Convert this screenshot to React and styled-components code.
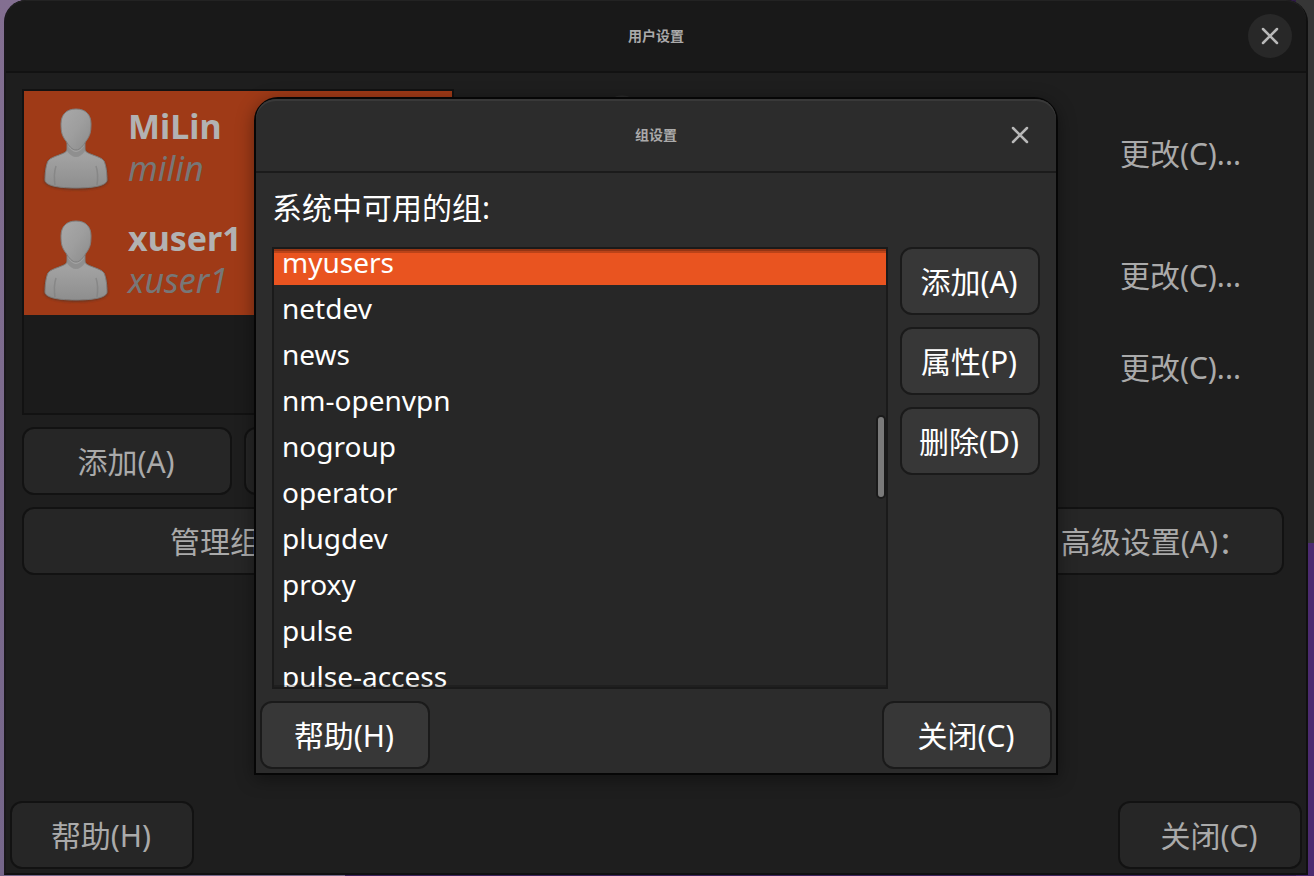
import React from 'react';
import styled, { createGlobalStyle } from 'styled-components';

const GlobalStyle = createGlobalStyle`
  * { box-sizing: border-box; }
  body { margin: 0; }
  body, button {
    font-family: "Noto Sans", "Noto Sans CJK SC", sans-serif;
  }
`;

const Desktop = styled.div`
  display: flex;
  min-height: 100vh;
  padding: 0 6px 1px 4px;
  overflow: hidden;
  background:
    linear-gradient(#363636 0 62%, #4c2b71 62%) right / 18px 100% no-repeat,
    linear-gradient(90deg, #75668a 0 345px, #3d225c 345px) bottom / 100% 2px no-repeat,
    linear-gradient(#836f91, #75668a) left / 24px 100% no-repeat,
    #2f1b47;
`;

const Window = styled.main`
  position: relative;
  flex: 1;
  display: flex;
  flex-direction: column;
  border: 2px solid #101010;
  border-top: 0;
  border-left-color: #1a181c;
  border-radius: 22px 22px 0 0;
  background: #1e1e1e;
  color: #aaa;
`;

const TitleBar = styled.header`
  position: relative;
  display: flex;
  align-items: center;
  justify-content: center;
  height: ${(p) => (p.$active ? 74 : 73)}px;
  border-bottom: 2px solid ${(p) => (p.$active ? '#1b1b1b' : '#121212')};
  border-radius: 20px 20px 0 0;
  background: ${(p) => (p.$active ? '#2c2c2c' : '#191919')};
  box-shadow: inset 0 ${(p) => (p.$active ? 2 : 1)}px ${(p) => (p.$active ? '#393939' : '#232323')};
`;

const Title = styled.h1`
  margin: 0;
  color: #aaa;
  font-size: 14px;
  line-height: 20px;
  font-weight: 700;
`;

const CloseIconButton = styled.button`
  position: absolute;
  right: 14px;
  display: grid;
  place-items: center;
  width: 44px;
  height: 44px;
  padding: 0;
  border: 0;
  border-radius: 50%;
  background: ${(p) => (p.$filled ? '#282828' : 'transparent')};
  color: #b8b8b8;
`;

const Button = styled.button`
  flex: ${(p) => (p.$grow ? '1 1 0' : '0 0 auto')};
  width: ${(p) => p.$width || 'auto'};
  height: 68px;
  padding: 2px ${(p) => p.$padEnd || 2}px 0 ${(p) => p.$padStart || 0}px;
  border: 2px solid ${(p) => (p.$active ? '#1a1a1a' : '#121212')};
  border-radius: 12px;
  background: ${(p) => (p.$active ? '#373737' : '#262626')};
  color: ${(p) => (p.$active ? '#fff' : '#aaa')};
  font-size: 30px;
  line-height: 40px;
  text-align: ${(p) => p.$align || 'center'};
  white-space: nowrap;
`;

const LinkButton = styled.button`
  height: 66px;
  padding: 0;
  border: 0;
  background: none;
  color: #aaa;
  font-size: 30px;
  line-height: 40px;
`;

const Content = styled.div`
  display: flex;
  flex-direction: column;
  gap: 12px;
  padding: 16px 22px 0 16px;
`;

const Overview = styled.div`
  display: flex;
  justify-content: space-between;
`;

const UsersPane = styled.section`
  display: flex;
  flex-direction: column;
  gap: 12px;
  width: 432px;
`;

const UserList = styled.ul`
  height: 326px;
  margin: 0;
  padding: 0;
  border: 2px solid #121212;
  background: #1b1b1b;
  list-style: none;
`;

const UserRow = styled.li`
  display: flex;
  align-items: center;
  gap: 20px;
  height: 112px;
  padding-left: 20px;
  background: #9f3a17;
`;

const UserNames = styled.div`
  display: flex;
  flex-direction: column;
  font-size: 34px;
  line-height: 42px;
`;

const FullName = styled.strong`
  color: #b2b2b2;
`;

const LoginName = styled.em`
  color: #777;
`;

const ButtonRow = styled.div`
  display: flex;
  justify-content: space-between;
  gap: 12px;
`;

const DetailFace = styled.div`
  flex: 1;
  padding: 2px 0 0 136px;
  opacity: 0.12;
`;

const Details = styled.div`
  display: flex;
  flex-direction: column;
  padding: 32px 43px 0 0;
`;

const DetailRow = styled.div`
  height: ${(p) => p.$height}px;
`;

const Footer = styled.footer`
  display: flex;
  justify-content: space-between;
  margin-top: auto;
  padding: 0 4px 4px;
`;

const DialogLayer = styled.div`
  position: absolute;
  inset: 97px 0 auto;
  display: flex;
  justify-content: center;
`;

const Dialog = styled.section`
  width: 804px;
  max-width: 100%;
  border: 2px solid #060606;
  border-radius: 24px 24px 0 0;
  background: #2c2c2c;
  color: #fff;
  box-shadow: 0 4px 18px rgba(0, 0, 0, 0.4);
`;

const DialogBody = styled.div`
  padding: 15px 16px 12px;
`;

const GroupsLabel = styled.h3`
  margin: 0 0 19px;
  font-size: 30px;
  line-height: 40px;
  font-weight: 400;
`;

const GroupsArea = styled.div`
  display: flex;
  gap: 12px;
`;

const GroupFrame = styled.div`
  position: relative;
  flex: 1;
  height: 442px;
  overflow: hidden;
  border: 2px solid #1a1a1a;
  background: #272727;

  &::after {
    content: "";
    position: absolute;
    inset: 0;
    box-shadow:
      inset 0 2px rgba(0, 0, 0, 0.2),
      inset 0 4px rgba(0, 0, 0, 0.2),
      inset 0 -2px rgba(0, 0, 0, 0.2);
    pointer-events: none;
  }
`;

const GroupList = styled.ul`
  margin: -10px 0 0;
  padding: 0;
  list-style: none;
`;

const GroupRow = styled.li`
  height: 46px;
  padding-left: 8px;
  background: ${(p) => (p.$selected ? '#e95420' : 'transparent')};
  font-size: 28px;
  line-height: 46px;
`;

const ScrollThumb = styled.span`
  position: absolute;
  top: 166px;
  right: 0;
  width: 10px;
  height: 84px;
  border: 2px solid #1a1a1a;
  border-radius: 5px;
  background: #7a7a7a;
`;

const SideButtons = styled.div`
  display: flex;
  flex-direction: column;
  gap: 12px;
  width: 140px;
`;

const DialogFooter = styled.footer`
  display: flex;
  justify-content: space-between;
  padding: 0 4px 4px;
`;

function CrossIcon() {
  return (
    <svg width="18" height="18" viewBox="0 0 18 18" fill="none" stroke="currentColor" strokeWidth="2.5" strokeLinecap="round" aria-hidden="true">
      <path d="M2 2l14 14M16 2L2 16" />
    </svg>
  );
}

function Avatar({ id }) {
  return (
    <svg width="64" height="86" viewBox="0 -4 64 86" overflow="visible" aria-hidden="true">
      <defs>
        <linearGradient id={`${id}-body`} x1="0" x2="0" y1="0" y2="1">
          <stop offset="0" stopColor="#9c9c9c" />
          <stop offset="0.3" stopColor="#a2a2a2" />
          <stop offset="1" stopColor="#8e8e8e" />
        </linearGradient>
        <linearGradient id={`${id}-head`} x1="0" x2="1" y1="0" y2="1">
          <stop offset="0" stopColor="#a9a9a9" />
          <stop offset="0.5" stopColor="#9e9e9e" />
          <stop offset="1" stopColor="#8b8b8b" />
        </linearGradient>
        <filter id={`${id}-soft`} x="-20%" y="-20%" width="140%" height="140%">
          <feGaussianBlur stdDeviation="1.2" />
        </filter>
        <filter id={`${id}-edge`} x="-20%" y="-20%" width="140%" height="140%">
          <feGaussianBlur stdDeviation="0.5" />
        </filter>
      </defs>
      <path d="M0 73C1 62 2 55 5 53c6-5 14-6 18-10h18c4 4 12 5 18 10 3 2 4 9 5 20-2 12-62 12-64 0z" fill="#5a3020" opacity=".7" filter={`url(#${id}-soft)`} />
      <g filter={`url(#${id}-edge)`}>
        <path d="M23 34v7c0 3-3 4-8 6-5 2-9 3-11 6-2 4-3 12-3 19 0 5 11 8 31 8s31-3 31-8c0-7-1-15-3-19-2-3-6-4-11-6-5-2-8-3-8-6v-7z" fill={`url(#${id}-body)`} stroke="#7c7c7c" strokeWidth="1" />
        <path d="M23 37c4 5 6 7 9 7s5-2 9-7v6c-3 4-6 6-9 6s-6-2-9-6z" fill="#888" opacity=".7" />
        <path d="M12 58c-2 6-2 12-1 19M52 58c2 6 2 12 1 19" fill="none" stroke="#808080" strokeWidth="1.5" opacity=".7" />
        <path d="M32 1C22 1 17 7 17 16c0 8 1 12 5 17 3 5 6 9 10 9s7-4 10-9c4-5 5-9 5-17 0-9-5-15-15-15z" fill={`url(#${id}-head)`} stroke="#7e7e7e" strokeWidth="1" />
      </g>
    </svg>
  );
}

const users = [
  { name: 'MiLin', login: 'milin' },
  { name: 'xuser1', login: 'xuser1' },
];

const details = [122, 92, 68];

const groups = [
  'myusers', 'netdev', 'news', 'nm-openvpn', 'nogroup',
  'operator', 'plugdev', 'proxy', 'pulse', 'pulse-access',
];

function GroupsDialog() {
  return (
    <Dialog role="dialog" aria-labelledby="groups-title">
      <TitleBar $active>
        <Title as="h2" id="groups-title">组设置</Title>
        <CloseIconButton type="button" aria-label="关闭"><CrossIcon /></CloseIconButton>
      </TitleBar>
      <DialogBody>
        <GroupsLabel>系统中可用的组:</GroupsLabel>
        <GroupsArea>
          <GroupFrame>
            <GroupList>
              {groups.map((group, i) => (
                <GroupRow key={group} $selected={i === 0}>{group}</GroupRow>
              ))}
            </GroupList>
            <ScrollThumb />
          </GroupFrame>
          <SideButtons>
            <Button type="button" $active>添加(A)</Button>
            <Button type="button" $active>属性(P)</Button>
            <Button type="button" $active>删除(D)</Button>
          </SideButtons>
        </GroupsArea>
      </DialogBody>
      <DialogFooter>
        <Button type="button" $active $width="170px">帮助(H)</Button>
        <Button type="button" $active $width="170px">关闭(C)</Button>
      </DialogFooter>
    </Dialog>
  );
}

export default function App() {
  return (
    <>
      <GlobalStyle />
      <Desktop>
        <Window>
          <TitleBar>
            <Title>用户设置</Title>
            <CloseIconButton type="button" $filled aria-label="关闭"><CrossIcon /></CloseIconButton>
          </TitleBar>
          <Content>
            <Overview>
              <UsersPane>
                <UserList>
                  {users.map((user) => (
                    <UserRow key={user.login}>
                      <Avatar id={user.login} />
                      <UserNames>
                        <FullName>{user.name}</FullName>
                        <LoginName>{user.login}</LoginName>
                      </UserNames>
                    </UserRow>
                  ))}
                </UserList>
                <ButtonRow>
                  <Button type="button" $grow>添加(A)</Button>
                  <Button type="button" $grow aria-label="删除" />
                </ButtonRow>
              </UsersPane>
              <DetailFace><Avatar id="detail" /></DetailFace>
              <Details>
                {details.map((height) => (
                  <DetailRow key={height} $height={height}>
                    <LinkButton type="button">更改(C)...</LinkButton>
                  </DetailRow>
                ))}
              </Details>
            </Overview>
            <ButtonRow>
              <Button type="button" $grow $align="left" $padStart={146}>管理组</Button>
              <Button type="button" $grow $align="right" $padEnd={34}>高级设置(A)：</Button>
            </ButtonRow>
          </Content>
          <Footer>
            <Button type="button" $width="184px">帮助(H)</Button>
            <Button type="button" $width="184px">关闭(C)</Button>
          </Footer>
          <DialogLayer><GroupsDialog /></DialogLayer>
        </Window>
      </Desktop>
    </>
  );
}
